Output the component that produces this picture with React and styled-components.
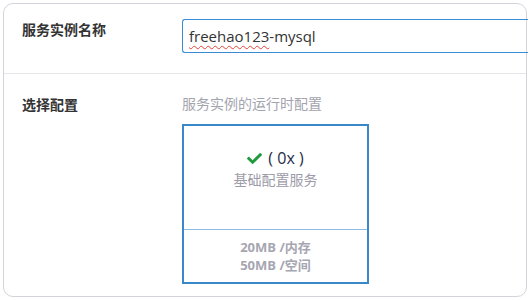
import React from "react";
import styled, { createGlobalStyle } from "styled-components";
import { FaCheck } from "react-icons/fa";

const GlobalStyle = createGlobalStyle`
  body {
    margin: 0;
    background: #fff;
    font-family: "Open Sans", "Noto Sans CJK SC", sans-serif;
  }
`;

const Panel = styled.div`
  margin: 3px 0 0 3px;
  width: 522px;
  height: 292px;
  border: 1px solid #d3d3dc;
  border-radius: 10px;
`;

const Row = styled.div`
  display: grid;
  grid-template-columns: 160px 1fr;
  padding: ${(p) => p.pad};
  border-bottom: ${(p) => (p.divided ? "1px solid #e6e6eb" : "none")};
`;

const Label = styled.div`
  font-size: 14px;
  font-weight: 700;
  color: #333;
  line-height: 20px;
  margin-top: ${(p) => p.top || 0}px;
`;

const FakeInput = styled.div`
  box-sizing: border-box;
  width: 346px;
  height: 34px;
  border: 1px solid #3a8ad4;
  border-right: none;
  border-radius: 3px 0 0 3px;
  padding: 0 6px;
  display: flex;
  align-items: center;
  font-size: 15px;
  color: #333;
`;

const Misspelled = styled.span`
  text-decoration: underline wavy #e0443a;
  text-decoration-thickness: 1px;
  text-underline-offset: 3px;
`;

const Hint = styled.div`
  font-size: 14px;
  line-height: 20px;
  color: #a4a4ae;
  margin-bottom: 10px;
`;

const Card = styled.div`
  box-sizing: border-box;
  width: 187px;
  height: 160px;
  border: 2px solid #3a87c9;
  display: flex;
  flex-direction: column;
`;

const CardTop = styled.div`
  height: 104px;
  box-sizing: border-box;
  padding-top: 22px;
  border-bottom: 1px solid #8cbbe4;
  text-align: center;
`;

const Title = styled.div`
  display: flex;
  align-items: center;
  justify-content: center;
  gap: 6px;
  line-height: 20px;
  font-size: 16px;
  color: #1e2b48;
  margin-bottom: 2px;
`;

const SubText = styled.div`
  font-size: 14px;
  line-height: 20px;
  color: #9c9ca8;
`;

const CardBottom = styled.div`
  padding-top: 8px;
  text-align: center;
`;

const Spec = styled.div`
  font-size: 13px;
  line-height: 18px;
  font-weight: 700;
  color: #a6a6b2;
`;

export default function App() {
  return (
    <>
      <GlobalStyle />
      <Panel>
        <Row pad="15px 0 20px 18px" divided>
          <Label top={1}>服务实例名称</Label>
          <FakeInput role="textbox">
            <Misspelled>freehao123</Misspelled>-mysql
          </FakeInput>
        </Row>
        <Row pad="20px 0 0 18px">
          <Label top={1}>选择配置</Label>
          <div>
            <Hint>服务实例的运行时配置</Hint>
            <Card>
              <CardTop>
                <Title>
                  <FaCheck size={15} color="#1f9a3c" />
                  <span>( 0x )</span>
                </Title>
                <SubText>基础配置服务</SubText>
              </CardTop>
              <CardBottom>
                <Spec>20MB /内存</Spec>
                <Spec>50MB /空间</Spec>
              </CardBottom>
            </Card>
          </div>
        </Row>
      </Panel>
    </>
  );
}
